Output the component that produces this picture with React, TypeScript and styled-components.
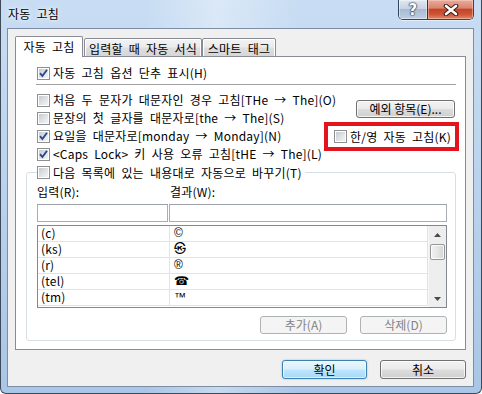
import React from 'react';
import styled, { createGlobalStyle, css } from 'styled-components';

const GlobalStyle = createGlobalStyle`
  * { box-sizing: border-box; }
  html, body { margin: 0; padding: 0; background: #fff; }
  body {
    font-family: "Noto Sans CJK KR", "Noto Sans", sans-serif;
    font-size: 12px;
    word-spacing: 3.2px;
    letter-spacing: 0.2px;
    color: #000;
  }
`;

const options = [
    { text: '처음 두 문자가 대문자인 경우 고침[THe → The](O)', checked: false },
    { text: '문장의 첫 글자를 대문자로[the → The](S)', checked: false },
    { text: '요일을 대문자로[monday → Monday](N)', checked: true },
    { text: '<Caps Lock> 키 사용 오류 고침[tHE → The](L)', checked: true },
];

const entries = [
    { from: '(c)', to: '©' },
    { from: '(ks)', to: '㉿' },
    { from: '(r)', to: '®' },
    { from: '(tel)', to: '☎' },
    { from: '(tm)', to: '™' },
];

const CheckBox = ({ checked }: { checked?: boolean }) => (
    <Box>
        <BoxInner>
            {checked && (
                <svg width="9" height="9" viewBox="0 0 9 9" style={{ overflow: 'visible' }}>
                    <path d="M1 4.2 L3.4 7 L8 0.8" fill="none" stroke="#2b4a8b" strokeWidth="1.9" />
                </svg>
            )}
        </BoxInner>
    </Box>
);

export default function App() {
    return (
        <>
            <GlobalStyle />
            <Window>
                <TitleBar>
                    <Title>자동 고침</Title>
                    <Caption>
                        <HelpButton>?</HelpButton>
                        <CloseButton>
                            <svg width="16" height="12" viewBox="0 0 16 12">
                                <path d="M3 2 L13 10 M13 2 L3 10" stroke="#3a1c14" strokeWidth="4.6" strokeLinecap="round" />
                                <path d="M3 2 L13 10 M13 2 L3 10" stroke="#fff" strokeWidth="2.6" strokeLinecap="round" />
                            </svg>
                        </CloseButton>
                    </Caption>
                </TitleBar>

                <Client>
                    <TabList>
                        <Tab $active $w={68}>자동 고침</Tab>
                        <Tab $w={118} style={{ marginLeft: 1 }}>입력할 때 자동 서식</Tab>
                        <Tab $w={74}>스마트 태그</Tab>
                    </TabList>

                    <Panel>
                        <CheckRow>
                            <CheckBox checked />
                            <span>자동 고침 옵션 단추 표시(H)</span>
                        </CheckRow>
                        <Separator />

                        <OptionsGrid>
                            <OptionList>
                                {options.map((o) => (
                                    <CheckRow key={o.text}>
                                        <CheckBox checked={o.checked} />
                                        <span>{o.text}</span>
                                    </CheckRow>
                                ))}
                            </OptionList>
                            <SideColumn>
                                <Button $w={99}>예외 항목(E)...</Button>
                                <Highlight>
                                    <CheckRow>
                                        <CheckBox />
                                        <span>한/영 자동 고침(K)</span>
                                    </CheckRow>
                                </Highlight>
                            </SideColumn>
                        </OptionsGrid>

                        <GroupBox>
                            <Legend>
                                <CheckBox />
                                <span>다음 목록에 있는 내용대로 자동으로 바꾸기(T)</span>
                            </Legend>

                            <FieldGrid>
                                <FieldLabel>입력(R):</FieldLabel>
                                <FieldLabel $pad>결과(W):</FieldLabel>
                                <TextBox />
                                <TextBox />
                            </FieldGrid>

                            <ListBox>
                                <Rows>
                                    {entries.map((e) => (
                                        <Row key={e.from}>
                                            <Cell>{e.from}</Cell>
                                            <Cell $right>{e.to}</Cell>
                                        </Row>
                                    ))}
                                </Rows>
                                <ScrollBar>
                                    <Arrow>
                                        <svg width="7" height="4" viewBox="0 0 7 4"><path d="M0 4 L3.5 0 L7 4 Z" fill="#4a4a4a" /></svg>
                                    </Arrow>
                                    <Thumb />
                                    <Track />
                                    <Arrow>
                                        <svg width="7" height="4" viewBox="0 0 7 4"><path d="M0 0 L7 0 L3.5 4 Z" fill="#4a4a4a" /></svg>
                                    </Arrow>
                                </ScrollBar>
                            </ListBox>

                            <ButtonRow $gap={13}>
                                <Button $w={87} disabled>추가(A)</Button>
                                <Button $w={87} disabled>삭제(D)</Button>
                            </ButtonRow>
                        </GroupBox>
                    </Panel>

                    <DialogButtons $gap={13}>
                        <Button $w={85} $default>확인</Button>
                        <Button $w={86}>취소</Button>
                    </DialogButtons>
                </Client>
            </Window>
        </>
    );
}

const Window = styled.div`
    width: 482px;
    height: 394px;
    display: flex;
    flex-direction: column;
    padding: 0 7px 6px 6px;
    border: 1px solid #3e4a5a;
    border-top: none;
    border-radius: 0 0 6px 6px;
    background:
        linear-gradient(90deg, rgba(255,255,255,0) 30%, rgba(255,255,255,0.35) 45%, rgba(255,255,255,0) 62%),
        linear-gradient(180deg, #c8ddf3 0%, #bcd4ee 40%, #a9c6e6 100%);
`;

const TitleBar = styled.div`
    height: 28px;
    flex: none;
    display: flex;
    align-items: flex-start;
    justify-content: space-between;
`;

const Title = styled.div`
    padding: 6px 0 0 1px;
    line-height: 16px;
    font-size: 12px;
    text-shadow: 0 0 6px rgba(255,255,255,0.9), 0 0 3px rgba(255,255,255,0.9);
`;

const Caption = styled.div`
    display: flex;
    height: 20px;
    border: 1px solid #34465c;
    border-top: none;
    border-radius: 0 0 5px 5px;
    overflow: hidden;
    box-shadow: 0 1px 0 rgba(255,255,255,0.5);
`;

const HelpButton = styled.div`
    width: 28px;
    display: flex;
    align-items: center;
    justify-content: center;
    font: bold 15px "DejaVu Sans", sans-serif;
    color: #fff;
    text-shadow: 0 0 1px #1d2b3c, 0 0 1px #1d2b3c, 0 0 2px #1d2b3c;
    background: linear-gradient(180deg, #dfe8f2 0%, #c6d4e4 45%, #a8bbd2 50%, #bfcfe1 100%);
    box-shadow: inset 0 0 0 1px rgba(255,255,255,0.45);
`;

const CloseButton = styled.div`
    width: 46px;
    display: flex;
    align-items: center;
    justify-content: center;
    border-left: 1px solid #4a2a22;
    background: linear-gradient(180deg, #e9ab9c 0%, #d98670 42%, #c54428 50%, #cc5535 75%, #e08a66 100%);
    box-shadow: inset 0 0 0 1px rgba(255,220,210,0.45);
`;

const Client = styled.div`
    flex: 1;
    display: flex;
    flex-direction: column;
    padding: 7px 7px 7px 7px;
    background: #f0f0f0;
    border: 1px solid #7d8ea4;
`;

const TabList = styled.div`
    height: 21px;
    flex: none;
    display: flex;
    align-items: flex-end;
    margin-bottom: -1px;
    position: relative;
    z-index: 1;
`;

const Tab = styled.div<{ $active?: boolean; $w: number }>`
    width: ${(p) => p.$w}px;
    display: flex;
    align-items: center;
    justify-content: center;
    white-space: nowrap;
    border: 1px solid #898c95;
    border-radius: 2px 2px 0 0;
    ${(p) =>
        p.$active
            ? css`
                  height: 21px;
                  padding-bottom: 2px;
                  border-bottom: none;
                  background: #fff;
              `
            : css`
                  height: 19px;
                  padding-top: 1px;
                  background: linear-gradient(180deg, #f3f3f3 0%, #ebebeb 45%, #dedede 55%, #d6d6d6 100%);
                  box-shadow: inset 0 1px 0 #fff, inset 1px 0 0 #fff, inset -1px 0 0 #fff;
              `}
`;

const Panel = styled.div`
    height: 294px;
    flex: none;
    display: flex;
    flex-direction: column;
    padding: 7px 9px 0 10px;
    background: #fff;
    border: 1px solid #898c95;
`;

const CheckRow = styled.label`
    height: 18px;
    display: flex;
    align-items: center;
    gap: 3px;
    white-space: nowrap;
    line-height: 14px;
    padding-left: 11px;
`;

const Box = styled.span`
    width: 13px;
    height: 13px;
    flex: none;
    padding: 1px;
    border: 1px solid #8e8f8f;
    background: #fff;
    display: inline-flex;
`;

const BoxInner = styled.span`
    width: 9px;
    height: 9px;
    display: flex;
    background: linear-gradient(135deg, #c5c9cf 0%, #dfe1e4 50%, #f4f4f4 100%);
`;

const Separator = styled.div`
    height: 1px;
    margin: 2px 0 6px 10px;
    background: #a0a0a0;
    flex: none;
`;

const OptionsGrid = styled.div`
    display: grid;
    grid-template-columns: minmax(0, 1fr) 135px;
    margin-right: -3px;
`;

const OptionList = styled.div`
    display: flex;
    flex-direction: column;
`;

const SideColumn = styled.div`
    display: flex;
    flex-direction: column;
    align-items: flex-end;
    padding-top: 9px;
    gap: 4px;
`;

const Highlight = styled.div`
    width: 135px;
    height: 29px;
    display: flex;
    align-items: center;
    border: 4px solid #e4141c;
    background: #fff;

    ${CheckRow} {
        padding-left: 6px;
    }
`;

const Button = styled.button<{ $w: number; $default?: boolean }>`
    width: ${(p) => p.$w}px;
    height: 19px;
    padding: 0;
    margin: 0;
    font: inherit;
    font-size: 12px;
    line-height: 14px;
    color: #000;
    border: 1px solid #707070;
    border-radius: 3px;
    background: linear-gradient(180deg, #f2f2f2 0%, #ebebeb 49%, #dddddd 51%, #cfcfcf 100%);
    box-shadow: inset 0 0 0 1px rgba(255,255,255,0.75);

    ${SideColumn} & {
        height: 18px;
        margin-right: 4px;
    }

    ${(p) =>
        p.$default &&
        css`
            border-color: #3c7fb1;
            background: linear-gradient(180deg, #eaf6fd 0%, #d9f0fc 49%, #bee6fd 51%, #a7d9f5 100%);
            box-shadow: inset 0 0 0 1px rgba(255,255,255,0.6), 0 0 2px rgba(60,160,230,0.6);
        `}

    &:disabled {
        height: 18px;
        color: #838383;
        border-color: #adb2b5;
        background: #f4f4f4;
        box-shadow: none;
    }
`;

const GroupBox = styled.div`
    margin-top: 9px;
    height: 169px;
    display: flex;
    flex-direction: column;
    padding: 0 8px 0 10px;
    border: 1px solid #d5dfe5;
    border-radius: 3px;
`;

const Legend = styled.div`
    width: fit-content;
    height: 18px;
    margin-top: -10px;
    padding-right: 3px;
    display: flex;
    align-items: center;
    gap: 3px;
    white-space: nowrap;
    background: #fff;
`;

const FieldGrid = styled.div`
    margin-top: 4px;
    display: grid;
    grid-template-columns: 131px 1fr;
    column-gap: 1px;
    row-gap: 5px;
`;

const FieldLabel = styled.div<{ $pad?: boolean }>`
    height: 14px;
    line-height: 14px;
    padding-left: ${(p) => (p.$pad ? 1 : 0)}px;
`;

const TextBox = styled.div`
    height: 18px;
    border: 1px solid #a9aeb6;
    border-top-color: #9ca1a9;
    background: #fff;
`;

const ListBox = styled.div`
    margin-top: 3px;
    height: 83px;
    display: flex;
    border: 1px solid #828790;
    background: #fff;
`;

const Rows = styled.div`
    flex: 1;
    display: flex;
    flex-direction: column;
`;

const Row = styled.div`
    height: 16px;
    display: grid;
    grid-template-columns: 132px 1fr;
`;

const Cell = styled.div<{ $right?: boolean }>`
    line-height: 14px;
    padding-left: ${(p) => (p.$right ? 4 : 3)}px;
    border-bottom: 1px solid #e3e3e3;
    border-right: 1px solid #e3e3e3;
    ${(p) =>
        p.$right &&
        css`
            font-family: "Liberation Sans", "DejaVu Sans", "Noto Sans CJK KR", sans-serif;
            font-size: 12px;
        `}
`;

const ScrollBar = styled.div`
    width: 18px;
    flex: none;
    display: flex;
    flex-direction: column;
    background: #eeeeee;
    border-left: 1px solid #f7f7f7;
`;

const Arrow = styled.div`
    height: 17px;
    display: flex;
    align-items: center;
    justify-content: center;
`;

const Thumb = styled.div`
    height: 16px;
    margin: 1px 1px 0 1px;
    border: 1px solid #979797;
    border-radius: 2px;
    background: linear-gradient(90deg, #f2f2f2 0%, #e6e6e6 50%, #d4d4d4 100%);
    box-shadow: inset 0 0 0 1px rgba(255,255,255,0.8);
`;

const Track = styled.div`
    flex: 1;
`;

const ButtonRow = styled.div<{ $gap: number }>`
    margin-top: 8px;
    display: flex;
    justify-content: flex-end;
    gap: ${(p) => p.$gap}px;
`;

const DialogButtons = styled(ButtonRow)`
    margin-top: 10px;
`;
